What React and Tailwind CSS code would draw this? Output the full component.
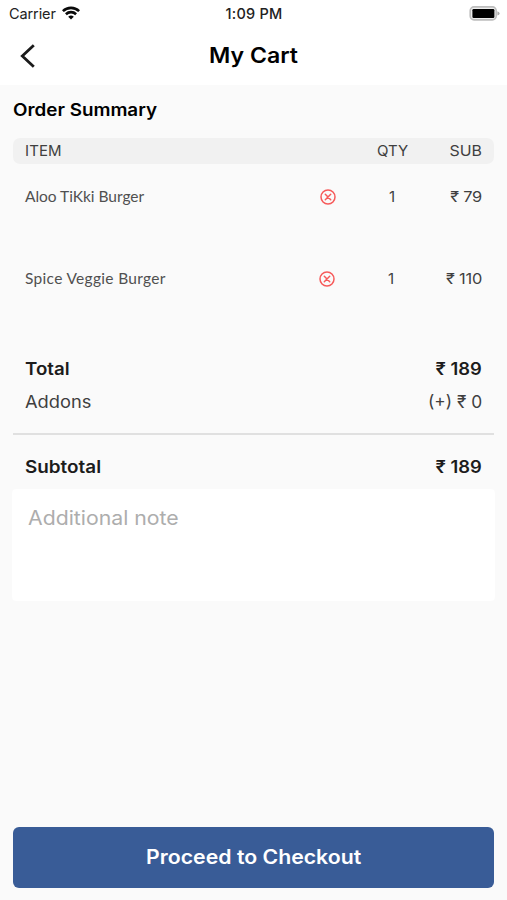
const items = [
  { name: 'Aloo TiKki Burger', qty: '1', price: '₹ 79', nameClass: 'tracking-[-0.02px]', shift: 'mr-0' },
  { name: 'Spice Veggie Burger', qty: '1', price: '₹ 110', nameClass: 'tracking-[0.32px]', shift: 'mr-px' },
];

function StatusBar() {
  return (
    <div className="grid h-7 grid-cols-3 items-center text-[14.5px] text-[#222]">
      <div className="flex items-center pl-[9px]">
        <span className="w-[53px] whitespace-nowrap tracking-[-0.1px]">Carrier</span>
        <svg className="h-[14px] w-[18px] -translate-y-px" viewBox="0 0 18 14" fill="none" stroke="#0a0a0a" strokeWidth="2.6">
          <path d="M0.9 5.1a11.7 11.7 0 0 1 16.2 0" />
          <path d="M3.9 8.2a7.4 7.4 0 0 1 10.2 0" />
          <path d="M9 13.6 6.2 10.8a4 4 0 0 1 5.6 0Z" fill="#0a0a0a" stroke="none" />
        </svg>
      </div>
      <div className="whitespace-nowrap pl-px text-center font-medium tracking-[0.25px]">1:09 PM</div>
      <div className="flex justify-end pr-[7px]">
        <svg className="h-[15px] w-[31px] -translate-y-px" viewBox="0 0 31 15">
          <rect x="1.2" y="0.9" width="26" height="13" rx="3.8" fill="#eee" stroke="#bdbdbd" strokeWidth="1.6" />
          <rect x="3.4" y="3" width="22" height="9" rx="1.2" fill="#000" />
          <path d="M28.4 5.3q2.2.7 2.2 2.1t-2.2 2.1Z" fill="#aaa" />
        </svg>
      </div>
    </div>
  );
}

function RemoveIcon() {
  return (
    <svg className="size-4" viewBox="0 0 16 16" fill="none" stroke="#f65a5a" strokeWidth="1.5" strokeLinecap="round">
      <circle cx="8" cy="8" r="7" />
      <path d="m5.3 5.3 5.4 5.4M10.7 5.3l-5.4 5.4" />
    </svg>
  );
}

export default function App() {
  return (
    <div className="flex h-[900px] w-[507px] flex-col overflow-hidden bg-[#fafafa] font-['Inter','Liberation_Sans',sans-serif] text-[#3f3f3f]">
      <header className="h-[85px] shrink-0 bg-white">
        <StatusBar />
        <div className="grid h-14 grid-cols-[60px_1fr_60px] items-center">
          <button aria-label="Back" className="pl-5">
            <svg className="h-6 w-4" viewBox="0 0 16 24" fill="none" stroke="#1b1b1b" strokeWidth="2.8">
              <path d="M13.8 1.2 2.3 12 13.8 22.8" />
            </svg>
          </button>
          <h1 className="scale-x-[1.1] text-center text-[21px] font-semibold text-black">My Cart</h1>
        </div>
      </header>

      <main className="flex grow flex-col px-[13px]">
        <h2 className="mt-[11px] h-7 origin-left scale-x-[1.108] text-[17px] leading-7 font-semibold text-black">Order Summary</h2>
        <div className="mt-[14px] flex h-[26px] items-center rounded-[7px] bg-[#f1f1f1] px-3 text-[15px]">
          <span className="grow tracking-[0.1px]">ITEM</span>
          <span className="w-[51px]">QTY</span>
          <span className="w-[54px] origin-right scale-x-[1.06] text-right">SUB</span>
        </div>

        {items.map((item) => (
          <div key={item.name} className="flex h-[82px] items-start px-3 pt-[21px] text-[15px] leading-6">
            <span className={`-mt-px grow font-['Lato'] text-[15.5px] text-[#505050] ${item.nameClass}`}>{item.name}</span>
            <span className={`flex items-start ${item.shift}`}>
              <span className="mt-1">
                <RemoveIcon />
              </span>
              <span className="ml-[46px] w-5 text-center">{item.qty}</span>
            </span>
            <span className="w-[80px] origin-right scale-x-[1.09] text-right tracking-[-0.2px]">{item.price}</span>
          </div>
        ))}

        <div className="mt-[25px] flex h-[33px] items-center justify-between px-3 text-[17px] font-semibold text-[#1c1c1c]">
          <span className="origin-left scale-x-[1.1]">Total</span>
          <span className="origin-right scale-x-[1.08]">₹ 189</span>
        </div>
        <div className="flex h-[33px] items-center justify-between px-3 text-[17px]">
          <span className="origin-left scale-x-[1.075]">Addons</span>
          <span className="origin-right scale-x-[1.02]">(+) ₹ 0</span>
        </div>
        <hr className="mt-[14px] border-t-2 border-[#e0e0e0]" />
        <div className="mt-[16px] flex h-[33px] items-center justify-between px-3 text-[17px] font-semibold text-[#1c1c1c]">
          <span className="origin-left scale-x-[1.11]">Subtotal</span>
          <span className="origin-right scale-x-[1.08]">₹ 189</span>
        </div>
        <textarea
          className="-mx-px mt-[5px] block h-[112px] resize-none rounded-[4px] bg-white px-4 pt-[15px] text-[19.5px] leading-7 placeholder:origin-left placeholder:scale-x-[1.09] placeholder:text-[#adadad]"
          placeholder="Additional note"
        />
        <button className="mt-auto mb-3 h-[61px] shrink-0 rounded-[6px] bg-[#395c97] text-[19.5px] font-semibold text-white">
          <span className="inline-block scale-x-[1.09]">Proceed to Checkout</span>
        </button>
      </main>
    </div>
  );
}
